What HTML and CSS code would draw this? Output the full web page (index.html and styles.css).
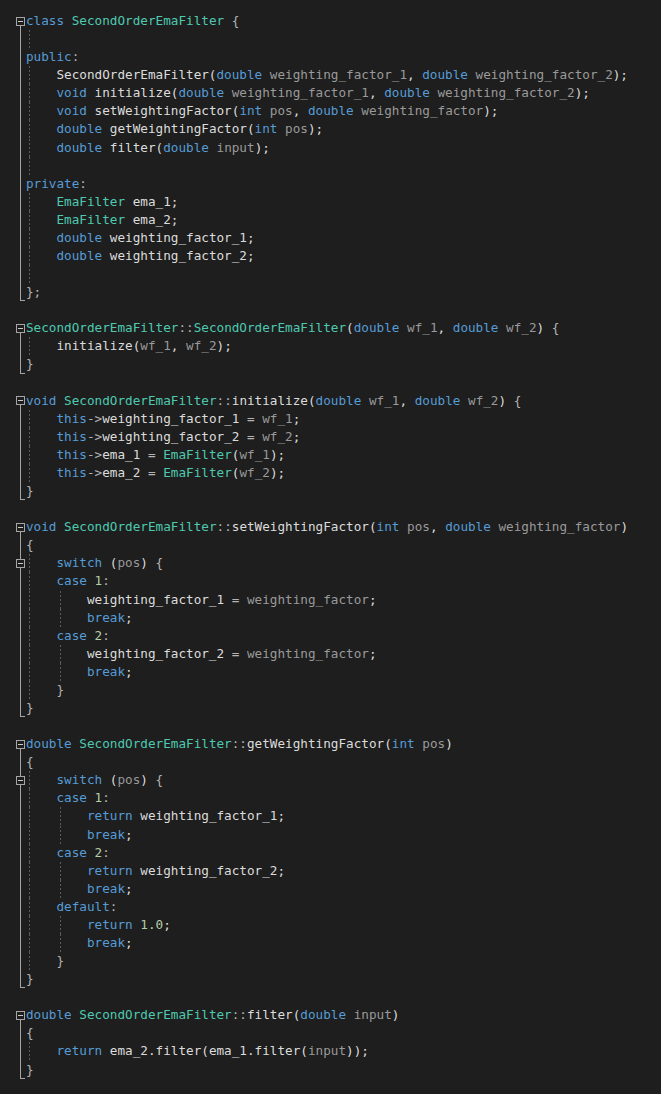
FILE: index.html
```html
<!DOCTYPE html>
<html lang="en">
<head>
    <link rel="stylesheet" href="styles.css">
    <meta charset="UTF-8">
    <title>SecondOrderEmaFilter.cpp</title>
</head>
<body>
    <div class="editor">
        <div class="ln"><span class="gut open"><i class="box"></i></span><span class="code"><span class="k">class</span> <span class="t">SecondOrderEmaFilter</span> <span class="o">{</span></span></div>
        <div class="ln"><span class="gut line"></span><span class="code g1"></span></div>
        <div class="ln"><span class="gut line"></span><span class="code"><span class="k">public</span><span class="o">:</span></span></div>
        <div class="ln"><span class="gut line"></span><span class="code g1">    SecondOrderEmaFilter(<span class="k">double</span> <span class="p">weighting_factor_1</span>, <span class="k">double</span> <span class="p">weighting_factor_2</span>);</span></div>
        <div class="ln"><span class="gut line"></span><span class="code g1">    <span class="k">void</span> initialize(<span class="k">double</span> <span class="p">weighting_factor_1</span>, <span class="k">double</span> <span class="p">weighting_factor_2</span>);</span></div>
        <div class="ln"><span class="gut line"></span><span class="code g1">    <span class="k">void</span> setWeightingFactor(<span class="k">int</span> <span class="p">pos</span>, <span class="k">double</span> <span class="p">weighting_factor</span>);</span></div>
        <div class="ln"><span class="gut line"></span><span class="code g1">    <span class="k">double</span> getWeightingFactor(<span class="k">int</span> <span class="p">pos</span>);</span></div>
        <div class="ln"><span class="gut line"></span><span class="code g1">    <span class="k">double</span> filter(<span class="k">double</span> <span class="p">input</span>);</span></div>
        <div class="ln"><span class="gut line"></span><span class="code g1"></span></div>
        <div class="ln"><span class="gut line"></span><span class="code"><span class="k">private</span><span class="o">:</span></span></div>
        <div class="ln"><span class="gut line"></span><span class="code g1">    <span class="t">EmaFilter</span> ema_1;</span></div>
        <div class="ln"><span class="gut line"></span><span class="code g1">    <span class="t">EmaFilter</span> ema_2;</span></div>
        <div class="ln"><span class="gut line"></span><span class="code g1">    <span class="k">double</span> weighting_factor_1;</span></div>
        <div class="ln"><span class="gut line"></span><span class="code g1">    <span class="k">double</span> weighting_factor_2;</span></div>
        <div class="ln"><span class="gut line"></span><span class="code g1"></span></div>
        <div class="ln"><span class="gut end"></span><span class="code"><span class="o">};</span></span></div>
        <div class="ln"><span class="gut"></span><span class="code"></span></div>

        <div class="ln"><span class="gut open"><i class="box"></i></span><span class="code"><span class="t">SecondOrderEmaFilter</span><span class="o">::</span><span class="t">SecondOrderEmaFilter</span>(<span class="k">double</span> <span class="p">wf_1</span>, <span class="k">double</span> <span class="p">wf_2</span>) <span class="o">{</span></span></div>
        <div class="ln"><span class="gut line"></span><span class="code g1">    initialize(<span class="p">wf_1</span>, <span class="p">wf_2</span>);</span></div>
        <div class="ln"><span class="gut end"></span><span class="code"><span class="o">}</span></span></div>
        <div class="ln"><span class="gut"></span><span class="code"></span></div>

        <div class="ln"><span class="gut open"><i class="box"></i></span><span class="code"><span class="k">void</span> <span class="t">SecondOrderEmaFilter</span><span class="o">::</span>initialize(<span class="k">double</span> <span class="p">wf_1</span>, <span class="k">double</span> <span class="p">wf_2</span>) <span class="o">{</span></span></div>
        <div class="ln"><span class="gut line"></span><span class="code g1">    <span class="k">this</span><span class="o">-&gt;</span>weighting_factor_1 <span class="o">=</span> <span class="p">wf_1</span>;</span></div>
        <div class="ln"><span class="gut line"></span><span class="code g1">    <span class="k">this</span><span class="o">-&gt;</span>weighting_factor_2 <span class="o">=</span> <span class="p">wf_2</span>;</span></div>
        <div class="ln"><span class="gut line"></span><span class="code g1">    <span class="k">this</span><span class="o">-&gt;</span>ema_1 <span class="o">=</span> <span class="t">EmaFilter</span>(<span class="p">wf_1</span>);</span></div>
        <div class="ln"><span class="gut line"></span><span class="code g1">    <span class="k">this</span><span class="o">-&gt;</span>ema_2 <span class="o">=</span> <span class="t">EmaFilter</span>(<span class="p">wf_2</span>);</span></div>
        <div class="ln"><span class="gut end"></span><span class="code"><span class="o">}</span></span></div>
        <div class="ln"><span class="gut"></span><span class="code"></span></div>

        <div class="ln"><span class="gut open"><i class="box"></i></span><span class="code"><span class="k">void</span> <span class="t">SecondOrderEmaFilter</span><span class="o">::</span>setWeightingFactor(<span class="k">int</span> <span class="p">pos</span>, <span class="k">double</span> <span class="p">weighting_factor</span>)</span></div>
        <div class="ln"><span class="gut line"></span><span class="code"><span class="o">{</span></span></div>
        <div class="ln"><span class="gut line"><i class="box"></i></span><span class="code g1">    <span class="k">switch</span> (<span class="p">pos</span>) <span class="o">{</span></span></div>
        <div class="ln"><span class="gut line"></span><span class="code g1">    <span class="k">case</span> <span class="n">1</span><span class="o">:</span></span></div>
        <div class="ln"><span class="gut line"></span><span class="code g2">        weighting_factor_1 <span class="o">=</span> <span class="p">weighting_factor</span>;</span></div>
        <div class="ln"><span class="gut line"></span><span class="code g2">        <span class="k">break</span>;</span></div>
        <div class="ln"><span class="gut line"></span><span class="code g1">    <span class="k">case</span> <span class="n">2</span><span class="o">:</span></span></div>
        <div class="ln"><span class="gut line"></span><span class="code g2">        weighting_factor_2 <span class="o">=</span> <span class="p">weighting_factor</span>;</span></div>
        <div class="ln"><span class="gut line"></span><span class="code g2">        <span class="k">break</span>;</span></div>
        <div class="ln"><span class="gut line"></span><span class="code g1">    <span class="o">}</span></span></div>
        <div class="ln"><span class="gut end"></span><span class="code"><span class="o">}</span></span></div>
        <div class="ln"><span class="gut"></span><span class="code"></span></div>

        <div class="ln"><span class="gut open"><i class="box"></i></span><span class="code"><span class="k">double</span> <span class="t">SecondOrderEmaFilter</span><span class="o">::</span>getWeightingFactor(<span class="k">int</span> <span class="p">pos</span>)</span></div>
        <div class="ln"><span class="gut line"></span><span class="code"><span class="o">{</span></span></div>
        <div class="ln"><span class="gut line"><i class="box"></i></span><span class="code g1">    <span class="k">switch</span> (<span class="p">pos</span>) <span class="o">{</span></span></div>
        <div class="ln"><span class="gut line"></span><span class="code g1">    <span class="k">case</span> <span class="n">1</span><span class="o">:</span></span></div>
        <div class="ln"><span class="gut line"></span><span class="code g2">        <span class="k">return</span> weighting_factor_1;</span></div>
        <div class="ln"><span class="gut line"></span><span class="code g2">        <span class="k">break</span>;</span></div>
        <div class="ln"><span class="gut line"></span><span class="code g1">    <span class="k">case</span> <span class="n">2</span><span class="o">:</span></span></div>
        <div class="ln"><span class="gut line"></span><span class="code g2">        <span class="k">return</span> weighting_factor_2;</span></div>
        <div class="ln"><span class="gut line"></span><span class="code g2">        <span class="k">break</span>;</span></div>
        <div class="ln"><span class="gut line"></span><span class="code g1">    <span class="k">default</span><span class="o">:</span></span></div>
        <div class="ln"><span class="gut line"></span><span class="code g2">        <span class="k">return</span> <span class="n">1.0</span>;</span></div>
        <div class="ln"><span class="gut line"></span><span class="code g2">        <span class="k">break</span>;</span></div>
        <div class="ln"><span class="gut line"></span><span class="code g1">    <span class="o">}</span></span></div>
        <div class="ln"><span class="gut end"></span><span class="code"><span class="o">}</span></span></div>
        <div class="ln"><span class="gut"></span><span class="code"></span></div>

        <div class="ln"><span class="gut open"><i class="box"></i></span><span class="code"><span class="k">double</span> <span class="t">SecondOrderEmaFilter</span><span class="o">::</span>filter(<span class="k">double</span> <span class="p">input</span>)</span></div>
        <div class="ln"><span class="gut line"></span><span class="code"><span class="o">{</span></span></div>
        <div class="ln"><span class="gut line"></span><span class="code g1">    <span class="k">return</span> ema_2.filter(ema_1.filter(<span class="p">input</span>));</span></div>
        <div class="ln"><span class="gut end"></span><span class="code"><span class="o">}</span></span></div>
    </div>
</body>
</html>
```

FILE: styles.css
```css
* {
    margin: 0;
    padding: 0;
    box-sizing: border-box;
}

body {
    background: #1e1e1e;
    color: #dcdcdc;
    font-family: "DejaVu Sans Mono", "Liberation Mono", monospace;
    font-size: 12.66px;
}

.editor {
    padding-top: 12px;
}

.ln {
    display: flex;
    height: 18.09px;
    line-height: 18.09px;
}

/* fold margin */
.gut {
    flex: none;
    width: 26px;
    display: flex;
    align-items: center;
}

.gut.open {
    background: linear-gradient(#a5a5a5, #a5a5a5) 20px 100% / 1px 50% no-repeat;
}

.gut.line {
    background: linear-gradient(#a5a5a5, #a5a5a5) 20px 0 / 1px 100% no-repeat;
}

.gut.end {
    background:
        linear-gradient(#a5a5a5, #a5a5a5) 20px 0 / 1px 100% no-repeat,
        linear-gradient(#a5a5a5, #a5a5a5) 20px 100% / 5px 1px no-repeat;
}

.box {
    display: block;
    width: 9px;
    height: 9px;
    margin: 0 0 0 16px;
    border: 1px solid #a5a5a5;
    background: linear-gradient(#c8c8c8, #c8c8c8) center / 5px 1px no-repeat, #1e1e1e;
}

/* code + indent guides */
.code {
    flex: 1;
    white-space: pre;
}

.g1 {
    background: repeating-linear-gradient(#5c5c5c 0 2px, transparent 2px 4px) 3px 0 / 1px 100% no-repeat;
}

.g2 {
    background:
        repeating-linear-gradient(#5c5c5c 0 2px, transparent 2px 4px) 3px 0 / 1px 100% no-repeat,
        repeating-linear-gradient(#5c5c5c 0 2px, transparent 2px 4px) 34px 0 / 1px 100% no-repeat;
}

.k { color: #569cd6; }
.t { color: #4ec9b0; }
.p { color: #9a9a9a; }
.n { color: #b5cea8; }
.o { color: #b4b4b4; }
```
